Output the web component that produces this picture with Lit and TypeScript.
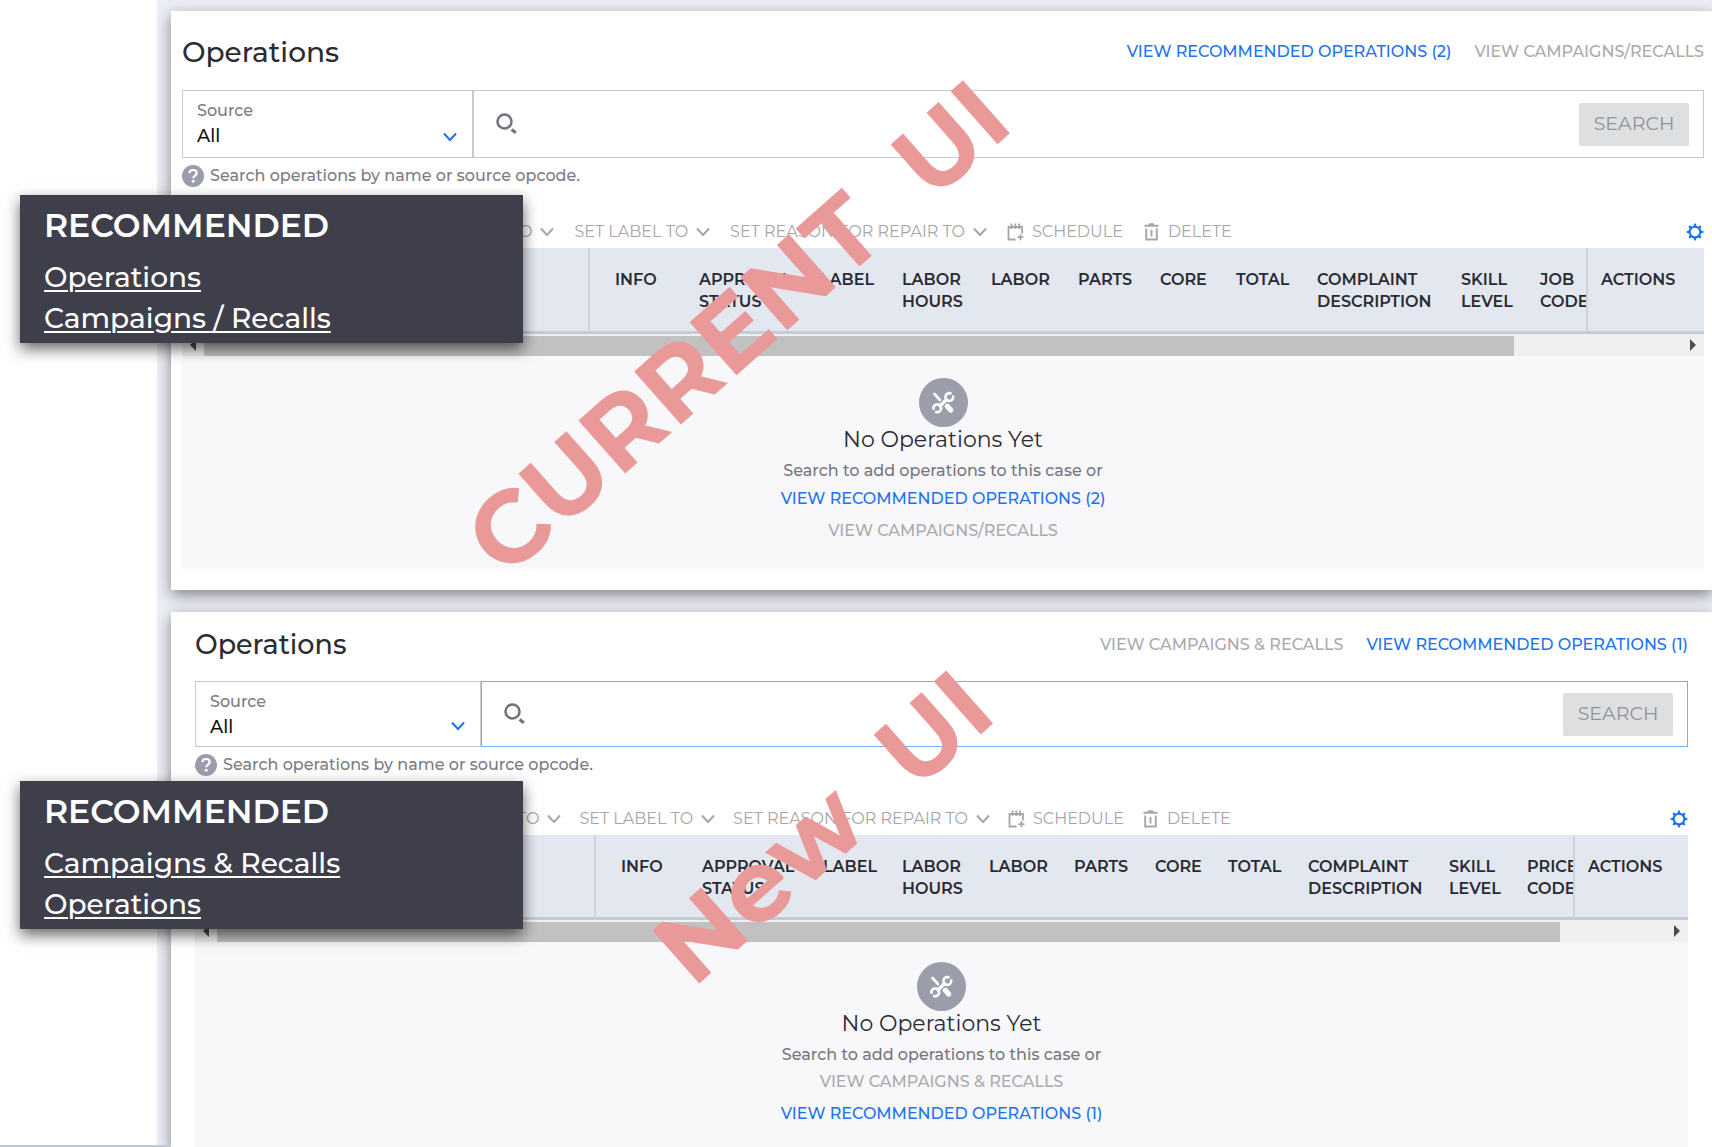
import { LitElement, html, svg, css, nothing } from "lit";
import { customElement, property } from "lit/decorators.js";
import { classMap } from "lit/directives/class-map.js";
import { styleMap } from "lit/directives/style-map.js";

interface Action {
  text: string;
  enabled: boolean;
}

interface Column {
  title: string;
  width: number;
}

interface Section {
  id: string;
  stamp: string;
  focused: boolean;
  actions: Action[];
  menu: string[];
  columns: Column[];
  thumb: number;
}

const columns = (titles: string[], widths: number[]): Column[] =>
  titles.map((title, i) => ({ title, width: widths[i] }));

const SECTIONS: Section[] = [
  {
    id: "current",
    stamp: "CURRENT  UI",
    focused: false,
    actions: [
      { text: "VIEW RECOMMENDED OPERATIONS (2)", enabled: true },
      { text: "VIEW CAMPAIGNS/RECALLS", enabled: false },
    ],
    menu: ["Operations", "Campaigns / Recalls"],
    columns: columns(
      ["INFO", "APPROVAL STATUS", "LABEL", "LABOR HOURS", "LABOR", "PARTS", "CORE", "TOTAL",
        "COMPLAINT DESCRIPTION", "SKILL LEVEL", "JOB CODE", "ACTIONS"],
      [97, 121, 82, 89, 87, 82, 76, 81, 144, 79, 60, 118]),
    thumb: 88.6,
  },
  {
    id: "new",
    stamp: "New  UI",
    focused: true,
    actions: [
      { text: "VIEW CAMPAIGNS & RECALLS", enabled: false },
      { text: "VIEW RECOMMENDED OPERATIONS (1)", enabled: true },
    ],
    menu: ["Campaigns & Recalls", "Operations"],
    columns: columns(
      ["INFO", "APPROVAL STATUS", "LABEL", "LABOR HOURS", "LABOR", "PARTS", "CORE", "TOTAL",
        "COMPLAINT DESCRIPTION", "SKILL LEVEL", "PRICE CODE", "ACTIONS"],
      [94, 121, 79, 87, 85, 81, 73, 80, 141, 78, 60, 115]),
    thumb: 92.7,
  },
];

const chevron = html`<svg class="chevron" viewBox="0 0 14 10" aria-hidden="true">
  <path d="M1 1.5 7 8l6-6.5" fill="none" stroke="currentColor" stroke-width="2" />
</svg>`;

const searchIcon = html`<svg class="magnifier" viewBox="0 0 22 22" aria-hidden="true">
  <circle cx="8.5" cy="8.5" r="7" fill="none" stroke="currentColor" stroke-width="2.6" />
  <path d="m15.6 16.4 4.2 3.4" stroke="currentColor" stroke-width="3.2" />
</svg>`;

const helpIcon = html`<svg class="help" viewBox="0 0 22 22" aria-hidden="true">
  <circle cx="11" cy="11" r="11" fill="#9b9dab" />
  <path d="M7.4 8.2C7.6 6 9 5 11 5c2.2 0 3.7 1.2 3.7 3.1 0 2.6-3.5 2.7-3.5 5.1" fill="none" stroke="#fff" stroke-width="2.2" />
  <circle cx="11.2" cy="16.3" r="1.5" fill="#fff" />
</svg>`;

const calendarIcon = html`<svg class="tool-icon" viewBox="0 0 17 18" aria-hidden="true">
  <path d="M8.5 16.5h-7V4H15v6.500M4.500.5V6M8.300.5V6M12.100.5V6M13.500 11.200v6M10.500 14.200h6"
    fill="none" stroke="currentColor" stroke-width="1.8" />
</svg>`;

const trashIcon = html`<svg class="tool-icon" viewBox="0 0 17 18" aria-hidden="true">
  <path d="M1.5 2.8h14M6 1.200h5M3.200 5.500v11h10.600v-11M8.500 7v6.500" fill="none" stroke="currentColor" stroke-width="1.9" />
</svg>`;

const gearIcon = html`<svg class="gear-icon" viewBox="0 0 18 18" aria-hidden="true">
  <circle cx="9" cy="9" r="5.3" fill="none" stroke="currentColor" stroke-width="2" />
  ${[0, 45, 90, 135, 180, 225, 270, 315].map(
    (a) => svg`<path d="M7.3 3.6 8.3.6h1.4l1 3z" fill="currentColor" transform="rotate(${a} 9 9)" />`)}
</svg>`;

const toolsIcon = html`<svg class="tools" viewBox="0 0 49 49" aria-hidden="true">
  <circle cx="24.5" cy="24.5" r="24.5" fill="#9b9dab" />
  <g fill="none" stroke="#fff">
    <path d="m15.5 16 5.500 6" stroke-width="2.6" stroke-linecap="round" />
    <path d="m28.3 28.300 3.400 3.700" stroke-width="5.2" stroke-linecap="round" />
    <path d="m20 29 8.5-8.5" stroke-width="3.4" />
    <path d="M31.5 15.3a3.9 3.9 0 1 0 2.7 3.2" stroke-width="2.6" stroke-linecap="round" />
    <path d="M17.1 34a3.9 3.9 0 1 0-2.7-3.2" stroke-width="2.6" stroke-linecap="round" />
  </g>
</svg>`;

@customElement("operations-panel")
export class OperationsPanel extends LitElement {
  @property({ attribute: false }) section!: Section;

  static styles = css`
    :host {
      display: block;
    }
    .panel {
      --head: 79px;
      --head-nudge: 2px 0 0;
      --title: 28px;
      --field: 68px;
      --source: 291px;
      --bar-top: 28px;
      --bar-left: 328px;
      --bar-gap: 20px;
      --th-top: 21px;
      --th-height: 86px;
      --line: #c5cad5;
      position: relative;
      box-sizing: border-box;
      height: 100%;
      display: flex;
      flex-direction: column;
      padding: 0 8px 21px 11px;
      background: #fff;
      box-shadow: 0 5px 14px rgba(0, 0, 0, 0.45);
      color: #2b2b33;
    }
    .panel.new {
      --head: 69px;
      --head-nudge: 0 0 4px;
      --title: 27px;
      --field: 66px;
      --source: 286px;
      --bar-top: 26px;
      --bar-left: 322px;
      --bar-gap: 18px;
      --th-height: 85px;
      padding: 0 24px 0 24px;
    }
    button,
    select,
    input {
      font: inherit;
      color: inherit;
      border: 0;
      margin: 0;
      padding: 0;
      background: none;
      outline: none;
    }
    .head {
      box-sizing: border-box;
      height: var(--head);
      padding: var(--head-nudge);
      display: flex;
      align-items: center;
      justify-content: space-between;
    }
    h2 {
      margin: 0;
      font-size: var(--title);
      font-weight: 500;
    }
    .links {
      display: flex;
      gap: 23px;
    }
    .action {
      line-height: 22px;
      font-weight: 500;
      color: #1b73ee;
      text-decoration: none;
      white-space: nowrap;
    }
    .action:disabled {
      color: #aaaaad;
    }
    .finder {
      display: flex;
      height: var(--field);
    }
    .source {
      position: relative;
      box-sizing: border-box;
      width: var(--source);
      display: flex;
      flex-direction: column;
      padding: 9px 14px 0;
      border: 1px solid var(--line);
    }
    .source label {
      line-height: 22px;
      font-weight: 500;
      color: #7b7c84;
    }
    .source select {
      appearance: none;
      font-size: 18px;
      line-height: 28px;
      height: 28px;
      font-weight: 500;
      color: #111;
    }
    .chevron {
      width: 14px;
      height: 10px;
      flex: none;
    }
    .source .chevron {
      position: absolute;
      right: 15px;
      bottom: 15px;
      color: #1b73ee;
      pointer-events: none;
    }
    .query {
      flex: 1;
      min-width: 0;
      box-sizing: border-box;
      display: flex;
      align-items: center;
      gap: 12px;
      padding: 0 14px 0 22px;
      border: 1px solid var(--line);
      color: #73747f;
    }
    .new .query {
      border-color: #6fb1f8;
    }
    .query input {
      flex: 1;
      min-width: 0;
      height: 40px;
    }
    .magnifier {
      width: 22px;
      height: 22px;
    }
    .search {
      width: 110px;
      height: 43px;
      border-radius: 2px;
      font-size: 19px;
      background: #dddfe0;
      color: #929396;
    }
    .hint {
      margin: 7px 0 0;
      display: flex;
      align-items: center;
      gap: 6px;
      height: 22px;
      font-weight: 500;
      color: #7b7c84;
    }
    .help {
      width: 22px;
      height: 22px;
    }
    .toolbar {
      display: flex;
      align-items: center;
      gap: var(--bar-gap);
      height: 33px;
      padding: var(--bar-top) 0 0 var(--bar-left);
      color: #a6a6a9;
      white-space: nowrap;
    }
    .toolbar button {
      display: flex;
      align-items: center;
      gap: 8px;
    }
    .tool-icon {
      width: 17px;
      height: 18px;
    }
    .toolbar .gear {
      margin-left: auto;
      color: #1b73ee;
    }
    .gear-icon {
      width: 18px;
      height: 18px;
    }
    table {
      width: 100%;
      table-layout: fixed;
      border-collapse: separate;
      border-spacing: 0;
      background: #e3e8f0;
    }
    th,
    td {
      box-sizing: border-box;
      height: var(--th-height);
      padding: var(--th-top) 0 0 14px;
      border-bottom: 3px solid #c6cad5;
      vertical-align: top;
      text-align: left;
      font-weight: 600;
      line-height: 22px;
      overflow: hidden;
    }
    th.first {
      padding-left: 25px;
      border-left: 2px solid #cdd2dc;
    }
    th.last {
      padding-left: 13px;
      border-left: 2px solid #cdd2dc;
    }
    .scroll {
      display: flex;
      align-items: center;
      height: 22px;
      background: #f0f0f1;
    }
    .scroll button {
      width: 22px;
      height: 20px;
      display: grid;
      place-items: center;
    }
    .scroll svg {
      width: 6px;
      height: 12px;
      fill: #4d4d4d;
    }
    .track {
      flex: 1;
      align-self: stretch;
      padding-top: 2px;
      display: flex;
    }
    .thumb {
      background: #c1c1c1;
    }
    .empty {
      flex: 1;
      display: flex;
      flex-direction: column;
      align-items: center;
      padding: 22px 0 27px;
      background: #f8f8fb;
      text-align: center;
    }
    .new .empty {
      padding: 20px 0 23px;
    }
    .tools {
      width: 49px;
      height: 49px;
    }
    h3 {
      margin: 0 0 7px;
      font-size: 22px;
      line-height: 26px;
      font-weight: 400;
    }
    .empty p {
      margin: 0 0 6px;
      line-height: 22px;
      font-weight: 500;
      color: #76777e;
    }
    .new .empty p {
      margin-bottom: 5px;
    }
    .empty .action + .action {
      margin-top: 10px;
    }
    .menu {
      position: absolute;
      left: -151px;
      top: 184px;
      box-sizing: border-box;
      width: 503px;
      height: 148px;
      padding: 10px 24px 0;
      background: #3e3f4b;
      color: #fff;
      box-shadow: 0 6px 14px rgba(0, 0, 0, 0.6);
    }
    .new .menu {
      top: 169px;
    }
    .menu h4 {
      margin: 0 0 12px;
      font-size: 33px;
      line-height: 40px;
      font-weight: 600;
    }
    .menu ul {
      list-style: none;
      margin: 0;
      padding: 0;
    }
    .menu li {
      font-size: 28px;
      line-height: 41px;
      font-weight: 500;
    }
    .menu a {
      color: inherit;
      text-decoration-thickness: 2px;
      text-underline-offset: 3px;
    }
    .stamp {
      position: absolute;
      left: 334px;
      top: 483px;
      font-size: 101px;
      line-height: 100px;
      font-weight: 700;
      color: #ea9999;
      white-space: pre;
      transform-origin: 0 86px;
      transform: rotate(-41.5deg);
      pointer-events: none;
    }
    .new .stamp {
      left: 522px;
      top: 291px;
    }
  `;

  private action(a: Action) {
    return a.enabled
      ? html`<a class="action" href="#">${a.text}</a>`
      : html`<button class="action" type="button" disabled>${a.text}</button>`;
  }

  render() {
    const s = this.section;
    const last = s.columns.length - 1;
    return html`
      <section class=${classMap({ panel: true, new: s.focused })}>
        <header class="head">
          <h2>Operations</h2>
          <nav class="links">${s.actions.map((a) => this.action(a))}</nav>
        </header>
        <div class="finder">
          <div class="source">
            <label for="source-${s.id}">Source</label>
            <select id="source-${s.id}"><option>All</option></select>
            ${chevron}
          </div>
          <div class="query">
            ${searchIcon}
            <input type="text" aria-labelledby="hint-${s.id}" />
            <button class="search" type="button" disabled>SEARCH</button>
          </div>
        </div>
        <p class="hint">${helpIcon}<span id="hint-${s.id}">Search operations by name or source opcode.</span></p>
        <div class="toolbar">
          <button type="button" disabled>TO ${chevron}</button>
          <button type="button" disabled>SET LABEL TO ${chevron}</button>
          <button type="button" disabled>SET REASON FOR REPAIR TO ${chevron}</button>
          <button type="button" disabled>${calendarIcon} SCHEDULE</button>
          <button type="button" disabled>${trashIcon} DELETE</button>
          <button class="gear" type="button">${gearIcon}</button>
        </div>
        <table>
          <colgroup>
            <col />
            ${s.columns.map((c) => html`<col style=${styleMap({ width: `${c.width}px` })} />`)}
          </colgroup>
          <thead>
            <tr>
              <td></td>
              ${s.columns.map((c, i) => html`<th scope="col"
                class=${i === 0 ? "first" : i === last ? "last" : nothing}>${c.title}</th>`)}
            </tr>
          </thead>
        </table>
        <div class="scroll">
          <button type="button"><svg viewBox="0 0 6 12"><path d="M6 0v12L0 6z" /></svg></button>
          <div class="track"><div class="thumb" style=${styleMap({ width: `${s.thumb}%` })}></div></div>
          <button type="button"><svg viewBox="0 0 6 12"><path d="M0 0v12l6-6z" /></svg></button>
        </div>
        <div class="empty">
          ${toolsIcon}
          <h3>No Operations Yet</h3>
          <p>Search to add operations to this case or</p>
          ${s.actions.map((a) => this.action(a))}
        </div>
        <aside class="menu">
          <h4>RECOMMENDED</h4>
          <ul>${s.menu.map((m) => html`<li><a href="#">${m}</a></li>`)}</ul>
        </aside>
        <div class="stamp">${s.stamp}</div>
      </section>
    `;
  }
}

@customElement("app-root")
export class AppRoot extends LitElement {
  static styles = css`
    :host {
      display: block;
      font: 400 16px/22px Montserrat, Inter, sans-serif;
    }
    .page {
      position: relative;
      box-sizing: border-box;
      min-height: 100vh;
      display: flex;
      padding-left: 157px;
      background: #fff;
      overflow: hidden;
    }
    .base {
      position: absolute;
      left: 0;
      bottom: 0;
      width: 171px;
      height: 3px;
      background: #c3c7d1;
    }
    .stage {
      flex: 1;
      min-width: 0;
      box-sizing: border-box;
      display: grid;
      grid-template-rows: auto 1fr;
      gap: 22px;
      padding: 11px 0 0 14px;
      background: #eceef5;
    }
  `;

  render() {
    return html`
      <main class="page">
        <div class="stage">
          ${SECTIONS.map((s) => html`<operations-panel .section=${s}></operations-panel>`)}
        </div>
        <div class="base"></div>
      </main>
    `;
  }
}
